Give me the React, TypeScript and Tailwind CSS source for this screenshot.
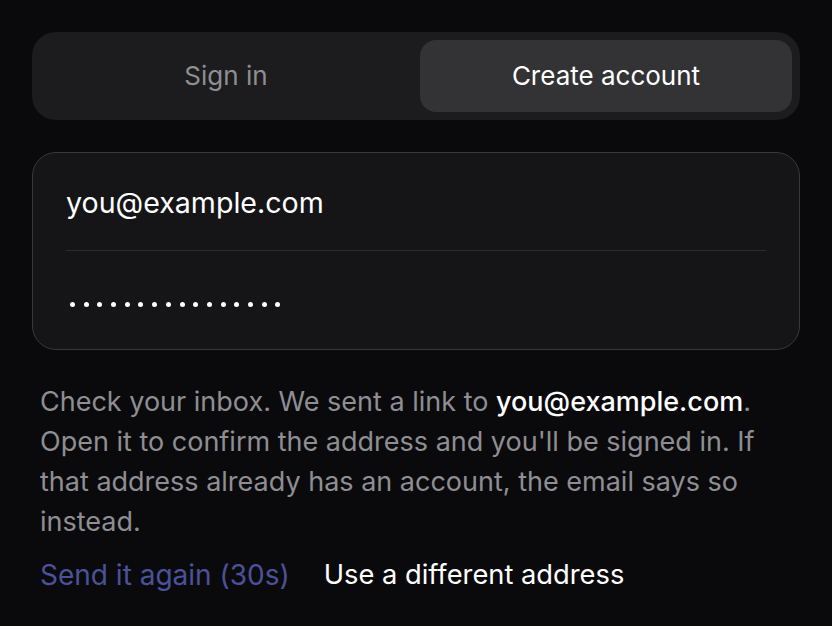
import React from "react";

export default function App() {
  const dots = Array.from({ length: 16 });
  return (
    <div
      className="min-h-[626px] w-full bg-[#0a0a0c] p-8 text-white"
      style={{ fontFamily: "Inter, 'Noto Sans', sans-serif" }}
    >
      <div className="flex gap-2 rounded-[24px] bg-[#1c1c1e] p-2">
        <button className="flex h-[72px] flex-1 items-center justify-center rounded-[16px] pb-[2px] text-[26px] text-[#8e8e93]">
          Sign in
        </button>
        <button className="flex h-[72px] flex-1 items-center justify-center rounded-[16px] bg-[#333336] pb-[2px] text-[26px] text-white">
          Create account
        </button>
      </div>

      <div className="mt-8 rounded-[24px] border border-[#38383a] bg-[#151517] px-[33px]">
        <div className="flex h-[97px] items-center pt-[3px] text-[28.6px] text-white">you@example.com</div>
        <div className="h-px bg-[#2c2c2e]" />
        <div className="flex h-[98px] items-center gap-[8.7px] pl-[4px] pt-[8px]">
          {dots.map((_, i) => (
            <span key={i} className="block h-[5px] w-[5px] rounded-full bg-white" />
          ))}
        </div>
      </div>

      <p className="mt-8 px-2 text-[27px] leading-[40px] text-[#8e8e93]">
        Check your inbox. We sent a link to{" "}
        <span className="font-medium text-white">you@example.com</span>. Open it to confirm the
        address and you'll be signed in. If that address already has an account, the email says so
        instead.
      </p>

      <div className="mt-[13px] flex items-center gap-[34px] px-2 text-[28px] leading-[40px]">
        <span className="text-[#4b5299]">Send it again (30s)</span>
        <span className="text-[27.3px] text-white">Use a different address</span>
      </div>
    </div>
  );
}
